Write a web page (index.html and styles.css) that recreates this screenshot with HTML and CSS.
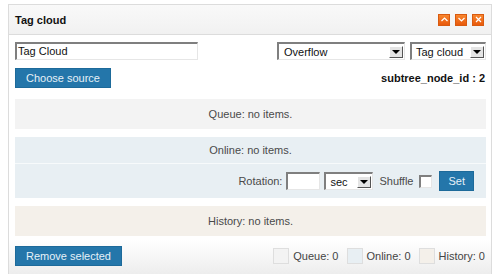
FILE: index.html
```html
<!DOCTYPE html>
<html>
    <head>
        <title>Tag cloud</title>
        <link rel="stylesheet" href="styles.css">
    </head>
    <body>
        <div class="panel">
            <div class="panel-head">
                <h2>Tag cloud</h2>
                <div class="head-tools">
                    <span class="tool">
                        <svg width="7" height="5" viewBox="0 0 7 5"><path d="M0.5 4 L3.5 1 L6.5 4" fill="none" stroke="#fff" stroke-width="1.2"/></svg>
                    </span>
                    <span class="tool">
                        <svg width="7" height="5" viewBox="0 0 7 5"><path d="M0.5 1 L3.5 4 L6.5 1" fill="none" stroke="#fff" stroke-width="1.2"/></svg>
                    </span>
                    <span class="tool">
                        <svg width="7" height="7" viewBox="0 0 7 7"><path d="M1 1 L6 6 M6 1 L1 6" fill="none" stroke="#fff" stroke-width="1.2"/></svg>
                    </span>
                </div>
            </div>

            <div class="panel-body">
                <div class="row">
                    <div class="text-input wide">Tag Cloud</div>
                    <div class="selects">
                        <div class="select overflow"><span>Overflow</span><span class="arrow"></span></div>
                        <div class="select kind"><span>Tag cloud</span><span class="arrow"></span></div>
                    </div>
                </div>

                <div class="row row-source">
                    <button class="btn">Choose source</button>
                    <b class="node-id">subtree_node_id : 2</b>
                </div>

                <div class="box box-queue">Queue: no items.</div>

                <div class="box box-online">
                    <div class="online-title">Online: no items.</div>
                    <div class="rotation">
                        <span>Rotation:</span>
                        <div class="text-input small"></div>
                        <div class="select unit"><span>sec</span><span class="arrow"></span></div>
                        <span>Shuffle</span>
                        <span class="check"></span>
                        <button class="btn set">Set</button>
                    </div>
                </div>

                <div class="box box-history">History: no items.</div>

                <div class="row row-bottom">
                    <button class="btn">Remove selected</button>
                    <div class="legend">
                        <span class="swatch sw-queue"></span><span>Queue: 0</span>
                        <span class="swatch sw-online"></span><span>Online: 0</span>
                        <span class="swatch sw-history"></span><span>History: 0</span>
                    </div>
                </div>
            </div>
        </div>
    </body>
</html>
```

FILE: styles.css
```css
* {
    margin: 0;
    padding: 0;
    box-sizing: border-box;
}

body {
    font-family: 'Liberation Sans', Arial, sans-serif;
    font-size: 11px;
    color: #444;
    background: #fff;
}

.panel {
    margin: 4px 6px 0 8px;
    height: 272px;
    border: 1px solid #dcdcdc;
    border-bottom: none;
    background: linear-gradient(to bottom, #fff 0, #fff 235px, #ececec 100%);
}

.panel-head {
    height: 30px;
    display: flex;
    align-items: center;
    justify-content: space-between;
    padding: 0 7px 0 6px;
    background: linear-gradient(to bottom, #f9f9f9, #f1f1f1);
    border-bottom: 1px solid #dcdcdc;
}

.panel-head h2 {
    font-size: 11px;
    color: #111;
}

.head-tools {
    display: flex;
    gap: 5px;
}

.tool {
    width: 12px;
    height: 12px;
    display: flex;
    align-items: center;
    justify-content: center;
    background: linear-gradient(to bottom, #f8862e, #e8590c);
    border: 1px solid #d85a10;
}

.panel-body {
    padding: 7px 5px 0 6px;
}

.row {
    display: flex;
    justify-content: space-between;
    align-items: center;
}

.text-input {
    height: 18px;
    background: #fff;
    border-top: 2px solid #7f7f7f;
    border-left: 2px solid #7f7f7f;
    border-right: 1px solid #e6e6e6;
    border-bottom: 1px solid #e6e6e6;
    color: #111;
    font-size: 11px;
    line-height: 15px;
    padding-left: 1px;
}

.text-input.wide {
    width: 183px;
}

.text-input.small {
    width: 34px;
    height: 18px;
}

.selects {
    display: flex;
    gap: 5px;
}

.select {
    height: 18px;
    display: flex;
    align-items: center;
    justify-content: space-between;
    background: #fff;
    border-top: 2px solid #7f7f7f;
    border-left: 2px solid #7f7f7f;
    border-right: 1px solid #e6e6e6;
    border-bottom: 1px solid #e6e6e6;
    padding: 0 1px 0 5px;
    color: #111;
}

.select.overflow {
    width: 128px;
}

.select.kind {
    width: 76px;
    padding-left: 4px;
}

.select.unit {
    width: 49px;
    padding-left: 4px;
}

.arrow {
    width: 14px;
    height: 12px;
    background: #e4e4e4;
    border-top: 1px solid #fff;
    border-left: 1px solid #fff;
    border-right: 1px solid #555;
    border-bottom: 1px solid #555;
    display: flex;
    align-items: center;
    justify-content: center;
}

.arrow::after {
    content: '';
    border-left: 4px solid transparent;
    border-right: 4px solid transparent;
    border-top: 4px solid #000;
}

.row-source {
    margin-top: 8px;
}

.btn {
    font-family: 'Liberation Sans', Arial, sans-serif;
    font-size: 11px;
    height: 20px;
    padding: 0 10px;
    border: 1px solid #1d6a9a;
    background: #2476aa;
    color: #e6f1f8;
}

.node-id {
    color: #111;
    font-size: 11px;
    padding-right: 1px;
}

.box {
    margin-top: 11px;
    text-align: center;
    color: #4a4a4a;
}

.box-queue {
    height: 30px;
    line-height: 30px;
    background: #f3f3f3;
}

.box-online {
    margin-top: 8px;
    background: #e8eff3;
}

.online-title {
    height: 27px;
    line-height: 27px;
    border-bottom: 1px solid #f7fafb;
}

.rotation {
    height: 34px;
    display: flex;
    align-items: center;
    justify-content: flex-end;
    gap: 4px;
    padding-right: 12px;
}

.rotation .select {
    margin-right: 2px;
}

.check {
    width: 13px;
    height: 13px;
    background: #fff;
    border-top: 2px solid #7f7f7f;
    border-left: 2px solid #7f7f7f;
    border-right: 1px solid #e6e6e6;
    border-bottom: 1px solid #e6e6e6;
    margin: 0 3px 0 2px;
}

.btn.set {
    padding: 0 8px;
    height: 20px;
}

.box-history {
    margin-top: 8px;
    height: 30px;
    line-height: 30px;
    background: #f4f0ea;
}

.row-bottom {
    margin-top: 10px;
}

.legend {
    display: flex;
    align-items: center;
    gap: 4px;
    padding-right: 1px;
}

.swatch {
    width: 16px;
    height: 16px;
    border: 1px solid #dedede;
    margin-left: 4px;
}

.sw-queue {
    background: #f3f3f3;
}

.sw-online {
    background: #e8eff3;
}

.sw-history {
    background: #f4f0ea;
}
```
